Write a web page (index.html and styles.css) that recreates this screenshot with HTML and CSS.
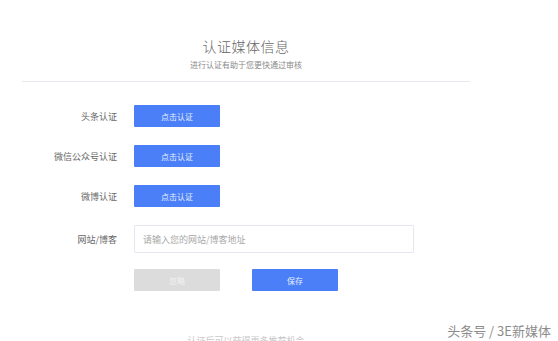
FILE: index.html
```html
<html>
<head>
    <link rel="stylesheet" href="styles.css">
</head>
<body>

<main class="page">

    <header class="head">
        <p class="title">认证媒体信息</p>
        <p class="subtitle">进行认证有助于您更快通过审核</p>
    </header>

    <section class="form">
        <div class="row">
            <span class="label">头条认证</span>
            <button class="btn">点击认证</button>
        </div>
        <div class="row">
            <span class="label">微信公众号认证</span>
            <button class="btn">点击认证</button>
        </div>
        <div class="row">
            <span class="label">微博认证</span>
            <button class="btn">点击认证</button>
        </div>
        <div class="row row-input">
            <span class="label">网站/博客</span>
            <input class="field" type="text" placeholder="请输入您的网站/博客地址">
        </div>
        <div class="row actions">
            <button class="btn btn-grey">忽略</button>
            <button class="btn">保存</button>
        </div>
    </section>

    <p class="foot">认证后可以获得更多推荐机会</p>

</main>

<div class="watermark">头条号 / 3E新媒体</div>

</body>
</html>
```

FILE: styles.css
```css
body {
    margin: 0px;
    background-color: white;
    font-family: "Noto Sans CJK SC", "Liberation Sans", sans-serif;
}

.page {
    width: 448px;
    margin-left: 22px;
}

.head {
    padding-top: 36px;
    padding-bottom: 10px;
    border-bottom: 1px solid #e8e9ee;
    text-align: center;
}
.title {
    margin: 0px;
    height: 20px;
    line-height: 20px;
    font-size: 14px;
    font-weight: 300;
    letter-spacing: 0.5px;
    color: #666666;
}
.subtitle {
    margin: 3px 0px 0px 0px;
    height: 12px;
    line-height: 12px;
    font-size: 8px;
    color: #8a8a8a;
}

.form {
    padding-top: 23px;
}
.row {
    display: flex;
    align-items: center;
    height: 22px;
    margin-bottom: 18px;
}
.row-input {
    height: 28px;
    margin-bottom: 16px;
}
.label {
    width: 95px;
    margin-right: 17px;
    text-align: right;
    font-size: 9px;
    color: #666666;
}
.btn {
    width: 86px;
    height: 22px;
    padding: 0px;
    border: none;
    border-radius: 1px;
    background-color: #4a7ff7;
    color: #e8efff;
    font-family: "Noto Sans CJK SC", "Liberation Sans", sans-serif;
    font-size: 8px;
}
.btn-grey {
    background-color: #dcdcdc;
    color: #f2f2f2;
}
.actions {
    padding-left: 112px;
    gap: 32px;
}
.field {
    width: 280px;
    height: 28px;
    box-sizing: border-box;
    padding: 0px 8px;
    border: 1px solid #e4e7ee;
    border-radius: 1px;
    font-family: "Noto Sans CJK SC", "Liberation Sans", sans-serif;
    font-size: 9px;
    outline: none;
}
.field::placeholder {
    color: #a8a8a8;
}

.foot {
    margin: 43px 0px 0px 0px;
    text-align: center;
    font-size: 9px;
    color: #c8c8c8;
}

.watermark {
    position: absolute;
    right: 7px;
    top: 321px;
    font-size: 13px;
    color: #8c8c8c;
}
```
